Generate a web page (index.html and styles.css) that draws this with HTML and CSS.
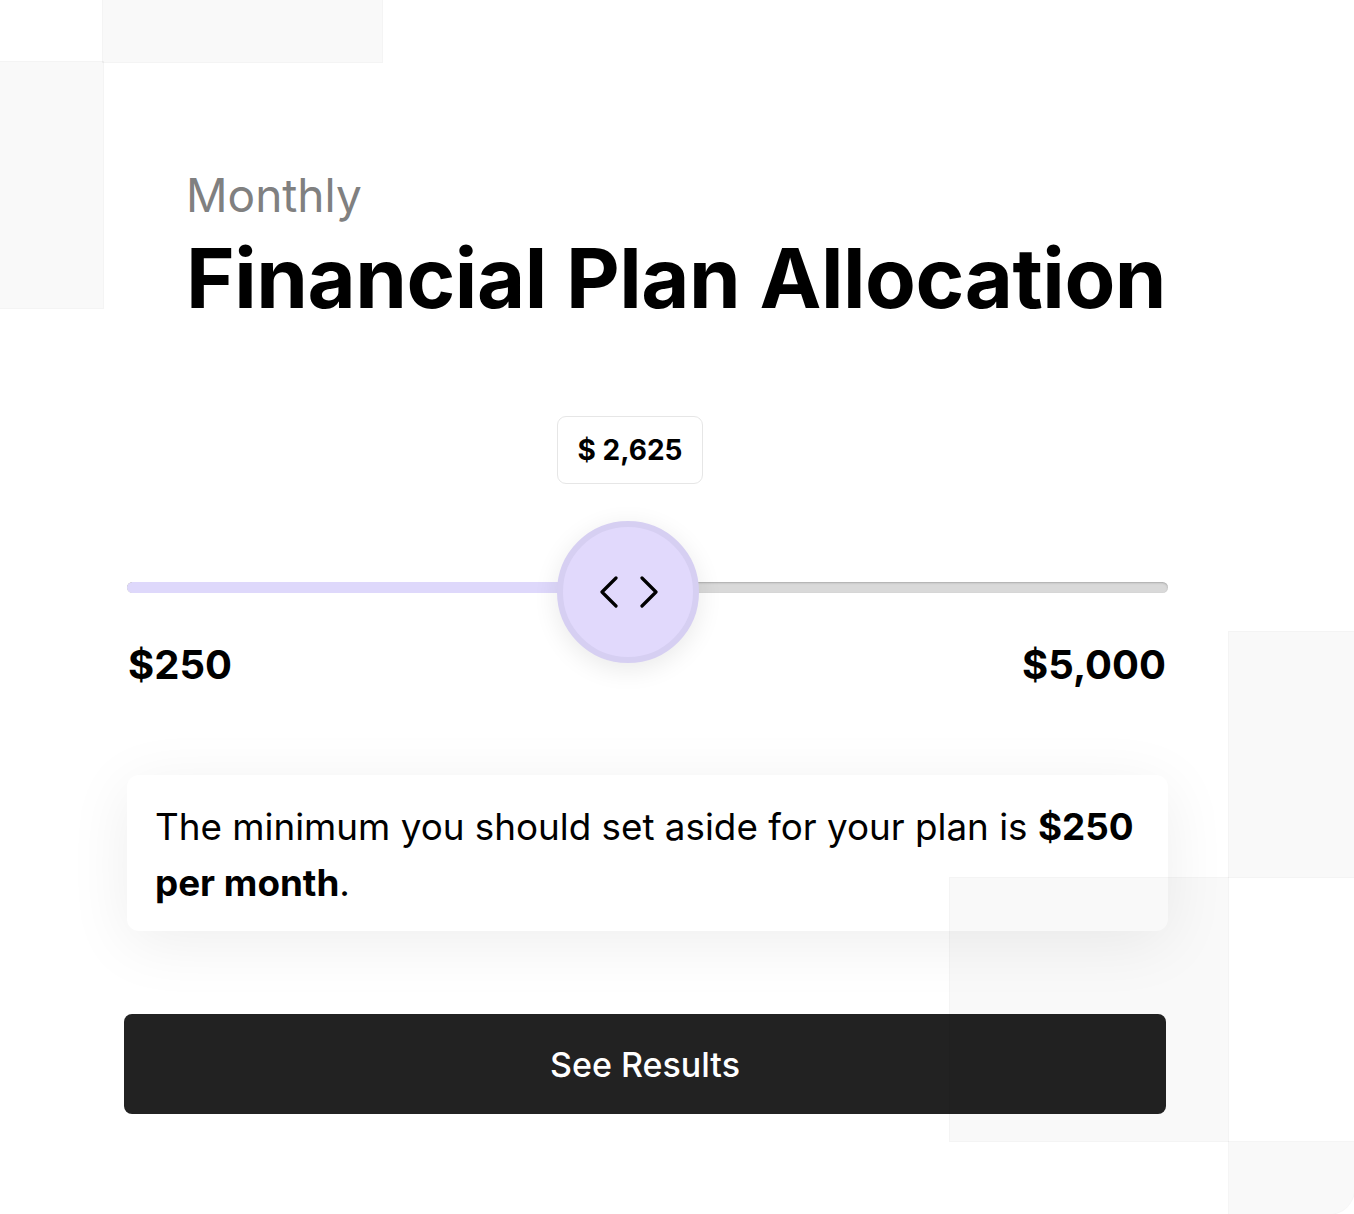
FILE: index.html
```html
<!DOCTYPE html>
<html lang="en">
<head>
<meta charset="utf-8">
<title>Financial Plan Allocation</title>
<link rel="stylesheet" href="styles.css">
</head>
<body>
<div class="page">
  <main class="main">
    <p class="eyebrow">Monthly</p>
    <h1 class="title">Financial Plan Allocation</h1>

    <div class="slider">
      <div class="tooltip" style="left: 430px;">$ 2,625</div>
      <div class="track">
        <div class="track-fill" style="width: 440px;"></div>
      </div>
      <div class="thumb" style="left: 430px;">
        <svg class="thumb-icon" width="58" height="32" viewBox="0 0 58 32" aria-hidden="true">
          <path d="M16 2 L2 16 L16 30" />
          <path d="M42 2 L56 16 L42 30" />
        </svg>
      </div>
      <div class="labels">
        <span>$250</span>
        <span>$5,000</span>
      </div>
    </div>

    <div class="card">
      The minimum you should set aside for your plan is <strong>$250</strong> <strong>per month</strong>.
    </div>

    <button class="cta" type="button">See Results</button>
  </main>

  <div class="sq sq-top"></div>
  <div class="sq sq-left"></div>
  <div class="sq sq-right"></div>
  <div class="sq sq-mid"></div>
  <div class="sq sq-bottom"></div>
</div>
</body>
</html>
```

FILE: styles.css
```css
* { box-sizing: border-box; }

html, body {
  margin: 0;
  padding: 0;
  background: #ffffff;
}

body {
  font-family: Inter, "Noto Sans", "Liberation Sans", sans-serif;
  color: #000000;
}

.page {
  position: relative;
  width: 1354px;
  height: 1214px;
  overflow: hidden;
  background: #ffffff;
}

.main {
  margin-left: 124px;
  width: 1044px;
  padding-top: 167px;
  display: flex;
  flex-direction: column;
  align-items: flex-start;
}

.eyebrow {
  margin: 0 0 0 62px;
  font-size: 46px;
  line-height: 56px;
  font-weight: 400;
  color: #808080;
}

.title {
  margin: 7px 0 0 62px;
  font-size: 83px;
  line-height: 96px;
  font-weight: 700;
  letter-spacing: -0.45px;
  white-space: nowrap;
  color: #000000;
}

.slider {
  position: relative;
  margin: 90px 0 0 3px;
  width: 1041px;
}

.tooltip {
  position: absolute;
  top: 0;
  width: 146px;
  height: 68px;
  display: flex;
  align-items: center;
  justify-content: center;
  background: #ffffff;
  border: 1.5px solid #e6e6e6;
  border-radius: 9px;
  font-size: 28px;
  font-weight: 700;
  color: #000000;
}

.track {
  margin-top: 166px;
  height: 11px;
  border-radius: 6px;
  background: #d9d9d9;
  box-shadow: inset 0 1px 2px rgba(0, 0, 0, 0.22);
  overflow: hidden;
}

.track-fill {
  height: 100%;
  background: #ded8fb;
  border-radius: 6px;
}

.thumb {
  position: absolute;
  top: 105px;
  width: 142px;
  height: 142px;
  border-radius: 50%;
  background: #e1d9fc;
  border: 6px solid #d6cff2;
  box-shadow: 0 6px 26px rgba(0, 0, 0, 0.09);
  display: flex;
  align-items: center;
  justify-content: center;
}

.thumb-icon {
  margin-left: 2px;
  fill: none;
  stroke: #000000;
  stroke-width: 3.2;
  stroke-linecap: round;
  stroke-linejoin: round;
}

.labels {
  margin-top: 49px;
  padding: 0 2px 0 1px;
  display: flex;
  justify-content: space-between;
  font-size: 40px;
  line-height: 46px;
  font-weight: 700;
}

.card {
  margin: 87px 0 0 3px;
  width: 1041px;
  padding: 24px 16px 20px 28px;
  background: #ffffff;
  border-radius: 12px;
  box-shadow: 0 12px 64px rgba(0, 0, 0, 0.07);
  font-size: 36.8px;
  line-height: 56px;
  font-weight: 400;
  color: #000000;
}

.card strong {
  font-weight: 700;
}

.cta {
  margin-top: 83px;
  width: 1042px;
  height: 100px;
  border: 0;
  border-radius: 8px;
  background: #222222;
  color: #ffffff;
  font-family: inherit;
  font-size: 34px;
  font-weight: 500;
  cursor: pointer;
}

.sq {
  position: absolute;
  background: rgba(0, 0, 0, 0.024);
  border: 1px solid rgba(0, 0, 0, 0.018);
  pointer-events: none;
}

.sq-top { left: 102px; top: -1px; width: 281px; height: 64px; }
.sq-left { left: -1px; top: 61px; width: 105px; height: 248px; }
.sq-right { left: 1228px; top: 631px; width: 127px; height: 247px; }
.sq-mid { left: 949px; top: 877px; width: 280px; height: 265px; }
.sq-bottom { left: 1228px; top: 1141px; width: 127px; height: 74px; border-bottom-right-radius: 26px; }
```
